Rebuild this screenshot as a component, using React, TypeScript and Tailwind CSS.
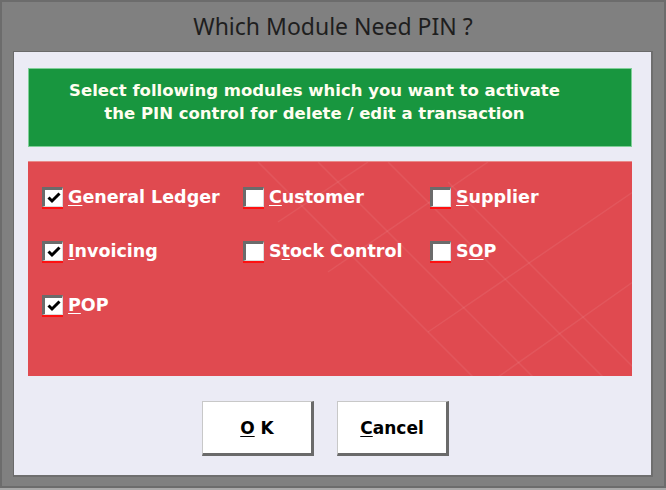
import React from "react";

const F = { fontFamily: '"DejaVu Sans", Verdana, sans-serif' };

function Check({ checked }: { checked: boolean }) {
  return (
    <div className="flex flex-col w-[21px]">
      <div className="w-[21px] h-[20px] bg-white border-t-[3px] border-l-[3px] border-r border-b border-t-[#6b6b6b] border-l-[#6b6b6b] border-r-[#dcdcdc] border-b-[#dcdcdc] flex items-center justify-center">
        {checked && (
          <svg width="14" height="12" viewBox="0 0 14 12">
            <path d="M1.5 5.5 L5 9 L12.5 1.5" stroke="#000" strokeWidth="3" fill="none" />
          </svg>
        )}
      </div>
      <div className="h-[2px] bg-[#ff1010]" />
    </div>
  );
}

function Item({ checked, pre, u, post }: { checked: boolean; pre: string; u: string; post: string }) {
  return (
    <div className="flex items-start gap-[5px] h-[22px]">
      <Check checked={checked} />
      <span className="text-[17.5px] font-bold text-white leading-[21px] whitespace-nowrap" style={F}>
        {pre}
        <span className="underline underline-offset-2">{u}</span>
        {post}
      </span>
    </div>
  );
}

export default function App() {
  return (
    <div className="w-[666px] h-[490px] bg-[#a9a9a9]">
      <div className="w-[666px] h-[488px] bg-[#808080] border-2 border-[#6c6c6c] flex flex-col">
        <div className="h-[49px] flex items-center justify-center">
          <span className="text-[23px] text-[#1e1e1e]" style={{ fontFamily: '"Noto Sans", "Open Sans", sans-serif' }}>
            Which Module Need PIN ?
          </span>
        </div>
        <div className="ml-[11px] w-[640px] h-[426px] bg-[#ebebf5] border-t border-l border-[#6a6a6a] border-r-2 border-b-2 border-r-[#6e6e6e] border-b-[#6e6e6e] pl-[14px] pr-[19px] pt-[16px] flex flex-col">
          <div className="h-[79px] bg-[#18963f] border border-[#7fcf98] pr-[31px] flex flex-col items-center justify-center pb-[12px]">
            <div className="text-[16.5px] font-bold text-[#fffef0] leading-[23px] text-center" style={F}>
              Select following modules which you want to activate
              <br />
              the PIN control for delete / edit a transaction
            </div>
          </div>
          <div className="relative mt-[14px] h-[215px] bg-[#e04a50] border-t border-[#e88a8a] pl-[14px] pt-[25px] overflow-hidden">
            <svg className="absolute inset-0 pointer-events-none" width="605" height="215">
              <g stroke="#ffffff" strokeOpacity="0.07" strokeWidth="1.5" fill="none">
                <path d="M230 0 L445 215" />
                <path d="M290 0 L505 215" />
                <path d="M360 0 L575 215" />
                <path d="M420 20 L605 205" />
                <path d="M250 60 L340 0" />
                <path d="M300 110 L460 0" />
                <path d="M400 170 L605 30" />
                <path d="M470 215 L605 120" />
              </g>
            </svg>
            <div className="relative grid grid-cols-[201px_187px_1fr] gap-y-[32px]">
              <Item checked pre="" u="G" post="eneral Ledger" />
              <Item checked={false} pre="" u="C" post="ustomer" />
              <Item checked={false} pre="" u="S" post="upplier" />
              <Item checked pre="" u="I" post="nvoicing" />
              <Item checked={false} pre="S" u="t" post="ock Control" />
              <Item checked={false} pre="S" u="O" post="P" />
              <Item checked pre="" u="P" post="OP" />
            </div>
          </div>
          <div className="mt-[25px] flex justify-center gap-[23px] pr-[9px]">
            {[
              { u: "O", rest: " K" },
              { u: "C", rest: "ancel" },
            ].map((b) => (
              <div
                key={b.u}
                className="w-[112px] h-[55px] bg-white border-t border-l border-[#c8c8c8] border-r-[3px] border-b-[3px] border-r-[#6a6a6a] border-b-[#6a6a6a] flex items-center justify-center pt-[2px]"
              >
                <span className="text-[17px] font-bold text-black" style={F}>
                  <span className="underline underline-offset-2">{b.u}</span>
                  {b.rest}
                </span>
              </div>
            ))}
          </div>
        </div>
      </div>
    </div>
  );
}
